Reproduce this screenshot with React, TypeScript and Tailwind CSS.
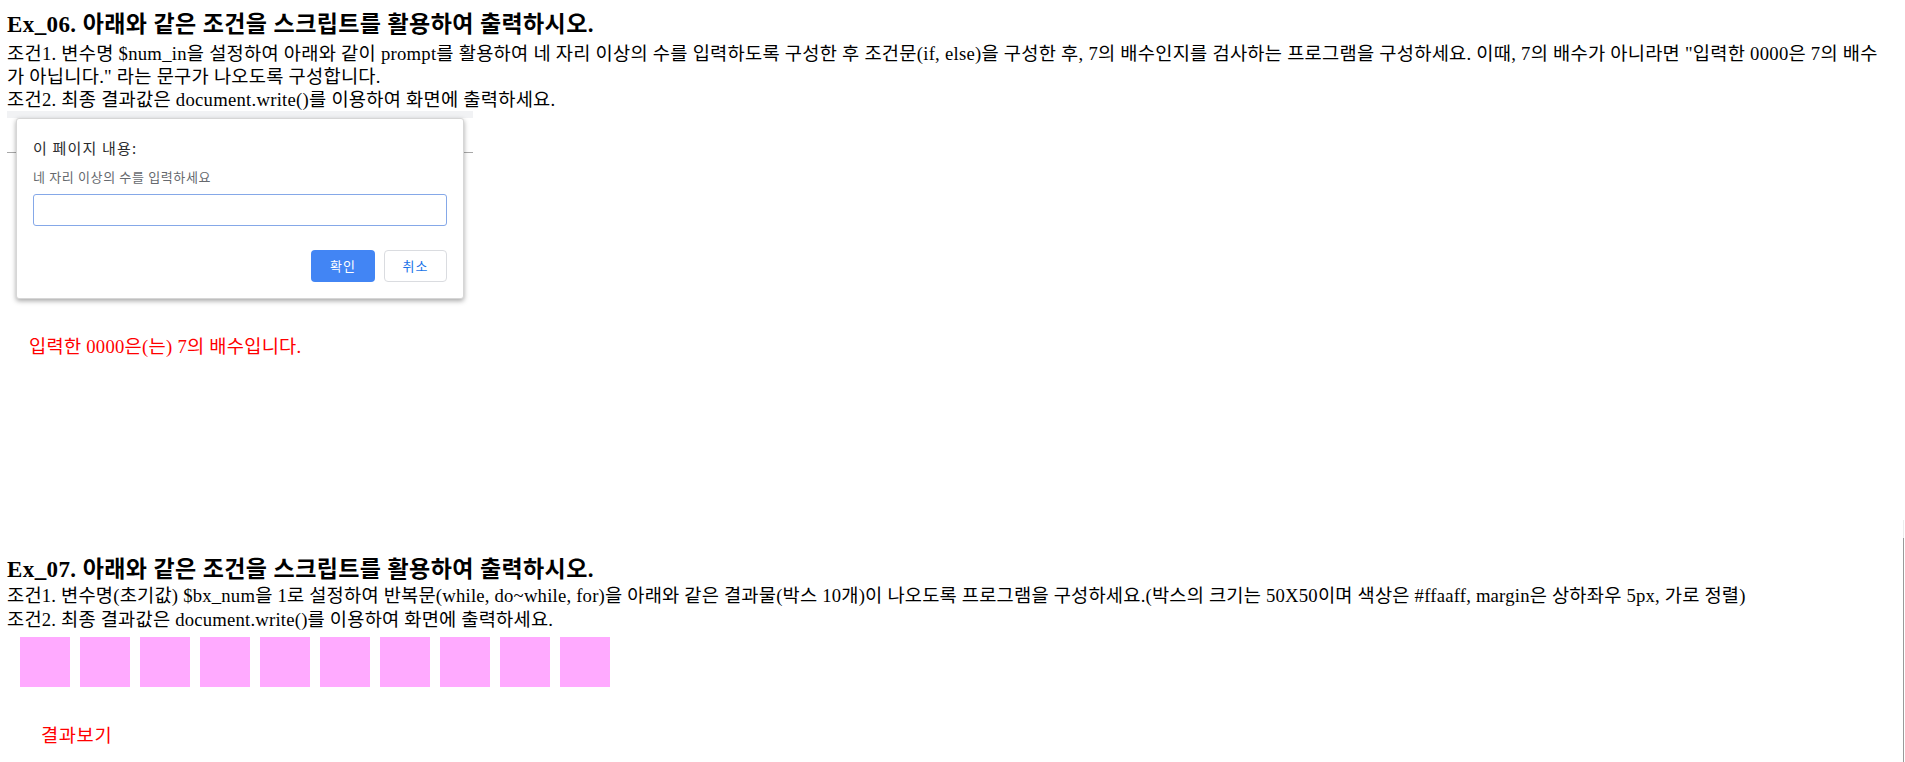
import React from 'react';

const serif = "font-['Liberation_Serif','Noto_Sans_CJK_KR',serif]";

function PromptShot() {
  // 브라우저 prompt 창을 캡처한 이미지 영역
  return (
    <div className="relative h-[194px] w-[466px]">
      <div className="h-[7px] w-full bg-[#f1f2f4]" />
      <div className="mt-[34px] h-px w-full bg-[#a8a8a8]" />
      <div className="absolute left-[9px] top-[7px] w-[448px] rounded-[3px] border border-[#d6d6d6] bg-white px-[16px] pt-[20px] pb-[16px] font-['Noto_Sans_CJK_KR','Noto_Sans',sans-serif] shadow-[0_2px_5px_rgba(0,0,0,0.35)]">
        <div className="text-[15px] leading-[18px] tracking-[1.2px] text-[#2a2b2e]">이 페이지 내용:</div>
        <div className="mt-[11px] text-[13px] leading-[18px] tracking-[0.65px] text-[#66696e]">네 자리 이상의 수를 입력하세요</div>
        <div className="mt-[8px] h-[32px] w-full rounded-[3px] border border-[#85a8e8] bg-white" />
        <div className="mt-[24px] flex justify-end gap-[9px]">
          <button className="h-[32px] w-[64px] rounded-[4px] bg-[#4285f4] text-[13px] tracking-[1px] text-white">확인</button>
          <button className="h-[32px] w-[63px] rounded-[4px] border border-[#dadce0] bg-white text-[13px] tracking-[1px] text-[#1a73e8]">취소</button>
        </div>
      </div>
    </div>
  );
}

export default function App() {
  const boxes = Array.from({ length: 10 }, (_, i) => i + 1);

  return (
    <div className={`relative min-h-[762px] bg-white text-black ${serif}`}>
      <section className="px-[7px] pt-[12px]">
        <h3 className="text-[23px] font-bold leading-[26px] tracking-[0.4px] whitespace-nowrap">Ex_06. 아래와 같은 조건을 스크립트를 활용하여 출력하시오.</h3>
        <p className="mt-[4px] text-[18.7px] leading-[23px] tracking-[0.25px] whitespace-nowrap">
          조건1. 변수명 $num_in을 설정하여 아래와 같이 prompt를 활용하여 네 자리 이상의 수를 입력하도록 구성한 후 조건문(if, else)을 구성한 후, 7의 배수인지를 검사하는 프로그램을 구성하세요. 이때, 7의 배수가 아니라면 "입력한 0000은 7의 배수
          <br />
          가 아닙니다." 라는 문구가 나오도록 구성합니다.
          <br />
          조건2. 최종 결과값은 document.write()를 이용하여 화면에 출력하세요.
        </p>
        <PromptShot />
        <p className="mt-[30px] pl-[22px] text-[18.7px] leading-[24px] tracking-[0.25px] text-[#ff0000]">입력한 0000은(는) 7의 배수입니다.</p>
      </section>

      <section className="mt-[198px] px-[7px]">
        <h3 className="text-[23px] font-bold leading-[26px] tracking-[0.4px] whitespace-nowrap">Ex_07. 아래와 같은 조건을 스크립트를 활용하여 출력하시오.</h3>
        <p className="mt-[1px] text-[18.7px] leading-[23.5px] tracking-[0.2px] whitespace-nowrap">
          조건1. 변수명(초기값) $bx_num을 1로 설정하여 반복문(while, do~while, for)을 아래와 같은 결과물(박스 10개)이 나오도록 프로그램을 구성하세요.(박스의 크기는 50X50이며 색상은 #ffaaff, margin은 상하좌우 5px, 가로 정렬)
          <br />
          조건2. 최종 결과값은 document.write()를 이용하여 화면에 출력하세요.
        </p>
        <div className="mt-[1px] flex pl-[8px]">
          {boxes.map((n) => (
            <div key={n} className="m-[5px] h-[50px] w-[50px] bg-[#ffaaff]" />
          ))}
        </div>
        <p className="mt-[32px] pl-[34px] text-[18.7px] leading-[24px] tracking-[0.6px] text-[#ff0000]">결과보기</p>
      </section>

      <div className="absolute right-[1px] top-[520px] h-[18px] w-px bg-[#ececec]" />
      <div className="absolute right-[1px] top-[538px] bottom-0 w-px bg-[#9a9a9a]" />
    </div>
  );
}
